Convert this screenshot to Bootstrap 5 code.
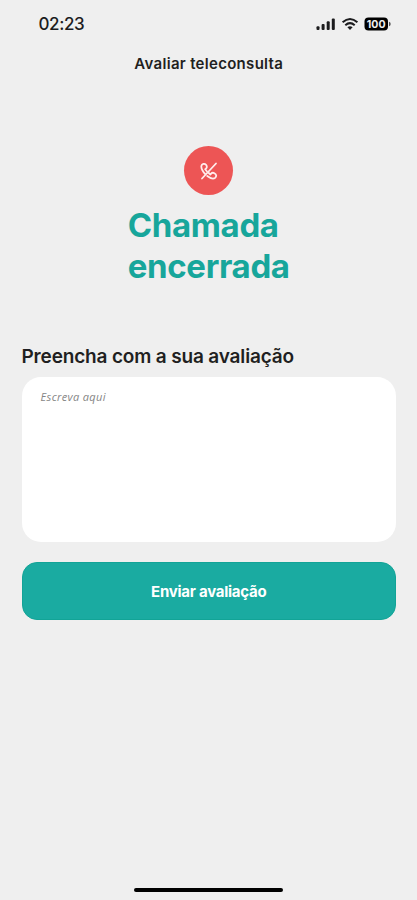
<!DOCTYPE html>
<html lang="pt-BR">
<head>
<meta charset="utf-8">
<meta name="viewport" content="width=device-width, initial-scale=1">
<title>Avaliar teleconsulta</title>
<link href="https://cdn.jsdelivr.net/npm/bootstrap@5.3.0/dist/css/bootstrap.min.css" rel="stylesheet">
<style>
body { background: #efefef; color: #1f1f21; font-family: Inter, "Liberation Sans", sans-serif; }
.screen { height: 900px; padding: 0 21px 8px 21.5px; }
.status-bar { height: 48px; padding: 0 5px 0 17px; }
.clock { font-size: 17px; line-height: 24px; font-weight: 500; letter-spacing: -.4px; color: #1c1c1e; }
.page-title { font-size: 15px; line-height: 32px; font-weight: 600; letter-spacing: .3px; }
.call-icon { width: 49px; height: 49px; margin-top: 66px; background: #ed5555; }
.call-state { width: 162px; margin-top: 9.5px; font-size: 33px; line-height: 41px; font-weight: 650; letter-spacing: -.35px; color: #17a69b; }
.review-label { margin-top: 56px; font-size: 19px; line-height: 28px; font-weight: 600; letter-spacing: -.16px; }
.review-box.form-control { height: 165px; margin-top: 6.5px; padding: 10px 19px; border-radius: 19px; font-size: 11px; line-height: 19px; resize: none; background: #fff; }
.review-box::placeholder { color: #858585; font-family: "Open Sans", sans-serif; font-style: italic; letter-spacing: .35px; opacity: 1; }
.send-btn.btn { height: 58px; margin-top: 20px; padding-top: 8px; border-radius: 15px; background: #1aaba1; border: 1px solid #12a497; color: #fff; font-size: 15px; font-weight: 700; letter-spacing: -.25px; }
.home-bar { width: 149px; height: 4px; background: #000; }
</style>
<script src="https://cdn.jsdelivr.net/npm/bootstrap@5.3.0/dist/js/bootstrap.bundle.min.js"></script>
</head>
<body>
<main class="screen d-flex flex-column overflow-hidden">
  <div class="status-bar d-flex align-items-center justify-content-between">
    <span class="clock">02:23</span>
    <svg width="75" height="16" viewBox="0 0 75 16" role="img" aria-label="Sinal, Wi-Fi e bateria 100">
      <g fill="#1c1c1e">
        <rect x="0.5" y="10.2" width="3" height="3.8" rx="1"/>
        <rect x="5.6" y="8" width="3" height="6" rx="1"/>
        <rect x="10.7" y="5.3" width="3" height="8.7" rx="1"/>
        <rect x="15.8" y="2.4" width="3" height="11.6" rx="1"/>
        <path d="M34 14 31.4 11.2Q34 9.2 36.6 11.2Z"/>
      </g>
      <g fill="none" stroke="#1c1c1e" stroke-width="2">
        <path d="M26.6 6.3Q34 -.3 41.4 6.3"/>
        <path d="M29.3 9.2Q34 5 38.7 9.2"/>
      </g>
      <rect x="48.5" y="1.5" width="23.5" height="13" rx="4" fill="#000"/>
      <path d="M73 5.7Q74.7 6.2 74.7 8T73 10.3Z" fill="#555"/>
      <text x="60.2" y="11.9" text-anchor="middle" font-family="Inter, sans-serif" font-size="10.5" font-weight="700" fill="#efefef">100</text>
    </svg>
  </div>
  <header class="page-title text-center">Avaliar teleconsulta</header>
  <div class="call-icon rounded-circle align-self-center d-flex align-items-center justify-content-center flex-shrink-0">
    <svg width="18" height="18" viewBox="0 0 18 18" fill="none" stroke="#ffecec" stroke-width="1.8" stroke-linecap="round" stroke-linejoin="round" aria-hidden="true">
      <path d="M16 1.5 2 16.5"/>
      <path d="M5.3 12.2C2.8 9.4 1 6.3 1.4 3.9C1.8 1.8 4.6 1 6 2.8C7.3 4.5 7.2 6 5.2 7.3L7 9.5"/>
      <path d="M7.2 14C10.2 16.2 13.2 17.2 15 15.9C16.9 14.4 16.4 12.2 14.4 11.2C12.6 10.3 11.5 10.7 10.4 12.6L8.3 10.5"/>
    </svg>
  </div>
  <h1 class="call-state align-self-center mb-0">Chamada encerrada</h1>
  <label class="review-label" for="review">Preencha com a sua avaliação</label>
  <textarea id="review" class="review-box form-control border-0 shadow-none flex-shrink-0" placeholder="Escreva aqui"></textarea>
  <button type="button" class="send-btn btn w-100 flex-shrink-0">Enviar avaliação</button>
  <div class="home-bar rounded-pill align-self-center mt-auto flex-shrink-0"></div>
</main>
</body>
</html>
